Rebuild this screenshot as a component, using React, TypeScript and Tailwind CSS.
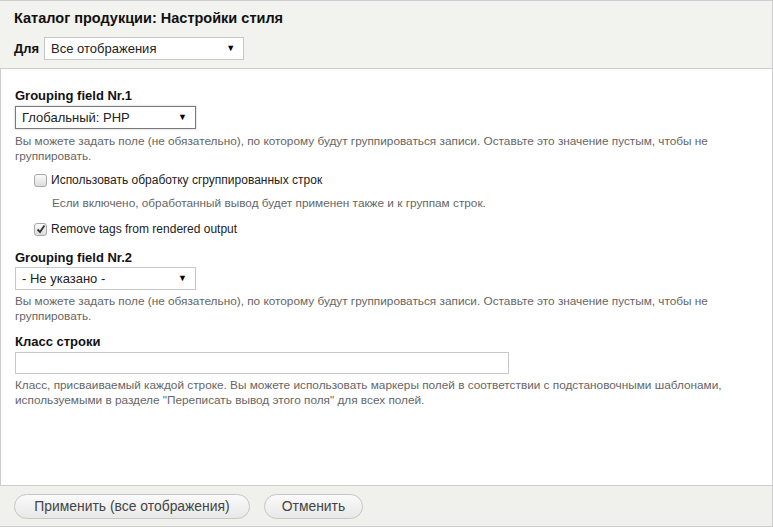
import React from "react";

const font = { fontFamily: '"Liberation Sans", Arial, sans-serif' };

function Select({ value, width, dark }: { value: string; width: string; dark?: boolean }) {
  return (
    <div
      className={`flex items-center justify-between bg-white border ${dark ? "border-[#7a7a7a] shadow-[0_0_2px_rgba(0,0,0,0.25)]" : "border-[#c8c8c8]"} ${width} h-[23px] pl-[6px] pr-[8px] text-[13px] text-[#222]`}
    >
      <span>{value}</span>
      <span className="text-[9px] text-black">▼</span>
    </div>
  );
}

function Desc({ children, className = "" }: { children: React.ReactNode; className?: string }) {
  return <div className={`text-[11.8px] leading-[15px] text-[#666] ${className}`}>{children}</div>;
}

function Checkbox({ checked }: { checked?: boolean }) {
  return (
    <div className="w-[13px] h-[13px] rounded-[3px] border border-[#a8a8a8] bg-gradient-to-b from-[#fbfbfb] to-[#dcdcdc] flex items-center justify-center">
      {checked && (
        <svg width="10" height="10" viewBox="0 0 10 10">
          <path d="M1.5 5.5 L4 8 L8.5 1.5" fill="none" stroke="#333" strokeWidth="1.8" />
        </svg>
      )}
    </div>
  );
}

export default function App() {
  return (
    <div style={font} className="w-[773px] h-[527px] flex flex-col bg-white text-[#222] overflow-hidden">
      <div className="bg-[#f2f2ee] border-t border-b border-[#cdcdcd] border-r h-[69px] px-[14px] pt-[8px]">
        <div className="text-[14.5px] font-bold leading-[18px] text-[#111]">Каталог продукции: Настройки стиля</div>
        <div className="flex items-center mt-[10px] gap-[5px]">
          <span className="text-[13px] font-bold text-[#111]">Для</span>
          <Select value="Все отображения" width="w-[200px]" />
        </div>
      </div>
      <div className="flex-1 border-l border-r border-[#cdcdcd] px-[14px] pt-[19px]">
        <div className="text-[13px] font-bold leading-[16px] text-[#111]">Grouping field Nr.1</div>
        <div className="mt-[2px]">
          <Select value="Глобальный: PHP" width="w-[181px]" dark />
        </div>
        <Desc className="mt-[5px]">
          Вы можете задать поле (не обязательно), по которому будут группироваться записи. Оставьте это значение пустым, чтобы не группировать.
        </Desc>
        <div className="flex items-center gap-[4px] mt-[7px] ml-[19px]">
          <Checkbox />
          <span className="text-[12px] text-[#222]">Использовать обработку сгруппированных строк</span>
        </div>
        <Desc className="ml-[37px] mt-[7px]">Если включено, обработанный вывод будет применен также и к группам строк.</Desc>
        <div className="flex items-center gap-[4px] mt-[9px] ml-[19px]">
          <Checkbox checked />
          <span className="text-[12px] text-[#222]">Remove tags from rendered output</span>
        </div>
        <div className="text-[13px] font-bold leading-[16px] mt-[12px] text-[#111]">Grouping field Nr.2</div>
        <div className="mt-[1px]">
          <Select value="- Не указано -" width="w-[181px]" />
        </div>
        <Desc className="mt-[4px]">
          Вы можете задать поле (не обязательно), по которому будут группироваться записи. Оставьте это значение пустым, чтобы не группировать.
        </Desc>
        <div className="text-[13px] font-bold leading-[16px] mt-[10px] text-[#111]">Класс строки</div>
        <div className="mt-[2px] w-[494px] h-[22px] border border-[#c8c8c8] bg-white" />
        <Desc className="mt-[4px]">
          Класс, присваиваемый каждой строке. Вы можете использовать маркеры полей в соответствии с подстановочными шаблонами, используемыми в разделе "Переписать вывод этого поля" для всех полей.
        </Desc>
      </div>
      <div className="h-[42px] bg-[#f0f0ec] border-t border-b border-r border-[#cdcdcd] flex items-center gap-[14px] px-[14px]">
        <button className="w-[236px] h-[25px] rounded-full border border-[#c6c6c6] bg-gradient-to-b from-[#fafafa] to-[#e8e8e8] text-[13.9px] text-[#444] flex items-center justify-center">
          Применить (все отображения)
        </button>
        <button className="w-[99px] h-[25px] rounded-full border border-[#c6c6c6] bg-gradient-to-b from-[#fafafa] to-[#e8e8e8] text-[13.9px] text-[#444] flex items-center justify-center">
          Отменить
        </button>
      </div>
    </div>
  );
}
